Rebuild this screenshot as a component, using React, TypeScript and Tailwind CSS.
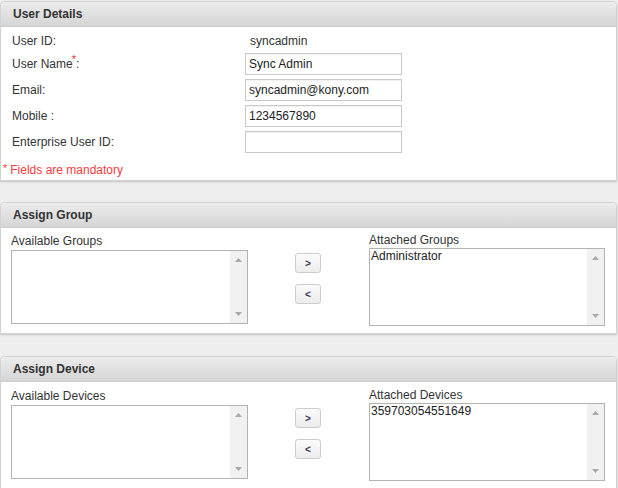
import React from 'react';

const Panel: React.FC<{ title: string; children: React.ReactNode; className?: string }> = ({ title, children, className }) => (
  <section className={`rounded-t-[5px] border border-[#d2d2d2] bg-white shadow-[0_1px_2px_rgba(0,0,0,0.18)] ${className ?? ''}`}>
    <div className="flex h-[25px] items-center rounded-t-[5px] border-b border-[#cdcdcd] bg-gradient-to-b from-[#ececec] to-[#d5d5d5] pl-[12px] text-[12px] font-bold text-[#333]">
      {title}
    </div>
    {children}
  </section>
);

const TextInput: React.FC<{ value?: string; className?: string }> = ({ value, className }) => (
  <div className={`flex h-[22px] w-[157px] items-center border border-[#c9c9c9] bg-white pl-[3px] text-[12px] text-[#222] shadow-[inset_0_1px_1px_rgba(0,0,0,0.06)] ${className ?? ''}`}>
    {value}
  </div>
);

const ListBox: React.FC<{ items?: string[]; className?: string }> = ({ items = [], className }) => (
  <div className={`flex border border-[#b3b3b3] bg-white ${className ?? ''}`}>
    <div className="flex-1 pl-[1px] text-[12px] leading-[14px] text-[#222]">
      {items.map((item) => (
        <div key={item}>{item}</div>
      ))}
    </div>
    <div className="flex w-[17px] flex-col items-center justify-between bg-[#f1f1f1] py-[7px]">
      <svg width="7" height="4" viewBox="0 0 7 4"><path d="M3.5 0L7 4H0z" fill="#a8a8a8" /></svg>
      <svg width="7" height="4" viewBox="0 0 7 4"><path d="M0 0h7L3.5 4z" fill="#a8a8a8" /></svg>
    </div>
  </div>
);

const MoveButton: React.FC<{ label: string; className?: string }> = ({ label, className }) => (
  <button className={`flex h-[20px] w-[26px] items-center justify-center rounded-[3px] border border-[#cccccc] bg-gradient-to-b from-[#fbfbfb] to-[#ececec] text-[10px] font-bold text-[#3a3a5a] ${className ?? ''}`}>
    {label}
  </button>
);

const Assign: React.FC<{ available: string; attached: string; items: string[]; top?: string }> = ({ available, attached, items, top }) => (
  <div className={`flex pl-[10px] ${top ?? ''}`}>
    <div className="w-[237px]">
      <div className="mt-[6px] h-[14px] leading-[14px]">{available}</div>
      <ListBox className="mt-[2px] h-[74px]" />
    </div>
    <div className="ml-[47px] w-[26px] pt-[25px]">
      <MoveButton label=">" />
      <MoveButton label="<" className="mt-[11px]" />
    </div>
    <div className="ml-[48px] w-[236px]">
      <div className="mt-[5px] h-[14px] leading-[14px]">{attached}</div>
      <ListBox items={items} className="mt-[1px] h-[78px]" />
    </div>
  </div>
);

export default function App() {
  return (
    <div className="min-h-[488px] overflow-hidden bg-[#eeeeee] pt-px font-['Liberation_Sans',Arial,sans-serif] text-[12px] text-[#333]">
      <Panel title="User Details" className="mr-px">
        <div className="pb-[3px] pl-[11px] pt-[5px]">
          <div className="flex h-[18px] items-center">
            <span className="w-[233px]">User ID:</span>
            <span className="pl-[5px]">syncadmin</span>
          </div>
          <div className="mt-[3px] flex items-center">
            <span className="w-[233px]">
              User Name<span className="relative -top-[5px] -ml-px text-[11px] text-[#ff2a2a]">*</span>:
            </span>
            <TextInput value="Sync Admin" />
          </div>
          <div className="mt-[4px] flex items-center">
            <span className="w-[233px]">Email:</span>
            <TextInput value="syncadmin@kony.com" />
          </div>
          <div className="mt-[4px] flex items-center">
            <span className="w-[233px]">Mobile :</span>
            <TextInput value="1234567890" />
          </div>
          <div className="mt-[4px] flex items-center">
            <span className="w-[233px]">Enterprise User ID:</span>
            <TextInput />
          </div>
          <div className="-ml-[9px] mt-[10px] flex items-start text-[#ff3b3b]">
            <span className="mr-[3px] text-[11px] leading-[10px]">*</span>
            <span className="leading-[14px]">Fields are mandatory</span>
          </div>
        </div>
      </Panel>

      <Panel title="Assign Group" className="mr-px mt-[21px]">
        <div className="h-[105px]">
          <Assign available="Available Groups" attached="Attached Groups" items={['Administrator']} />
        </div>
      </Panel>

      <Panel title="Assign Device" className="mr-px mt-[22px]">
        <div className="h-[110px]">
          <Assign available="Available Devices" attached="Attached Devices" items={['359703054551649']} top="pt-[1px]" />
        </div>
      </Panel>
    </div>
  );
}
